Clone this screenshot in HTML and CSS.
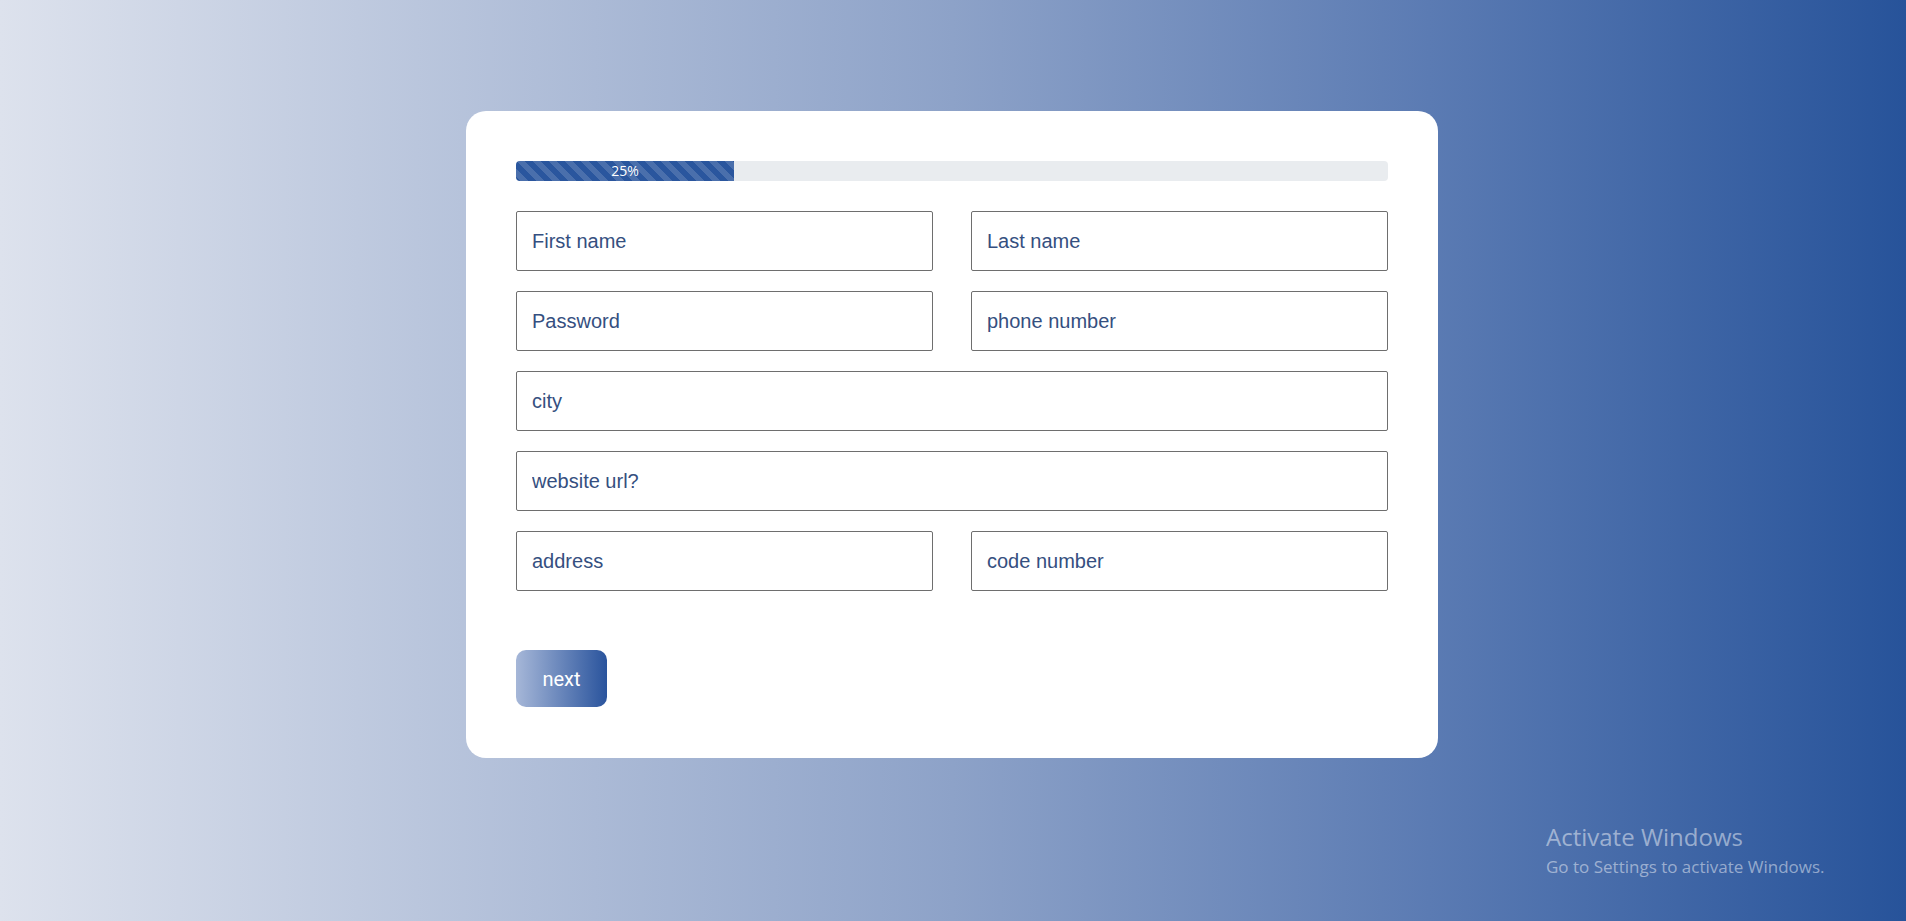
FILE: index.html
```html
<!DOCTYPE html>
<html lang="en">
<head>
<meta charset="utf-8">
<title>Form</title>
<link rel="stylesheet" href="styles.css">
</head>
<body>
<main class="page">
  <form class="card">
    <div class="progress">
      <div class="progress-fill" style="width:25%">25%</div>
    </div>
    <div class="fields">
      <input class="field" type="text" placeholder="First name">
      <input class="field" type="text" placeholder="Last name">
      <input class="field" type="password" placeholder="Password">
      <input class="field" type="text" placeholder="phone number">
      <input class="field wide" type="text" placeholder="city">
      <input class="field wide" type="text" placeholder="website url?">
      <input class="field" type="text" placeholder="address">
      <input class="field" type="text" placeholder="code number">
    </div>
    <button class="next" type="button">next</button>
  </form>
</main>
<div class="watermark">
  <div class="wm-title">Activate Windows</div>
  <div class="wm-sub">Go to Settings to activate Windows.</div>
</div>
</body>
</html>
```
FILE: styles.css
```css
html, body {
  margin: 0;
  padding: 0;
}
body {
  min-height: 100vh;
  background: linear-gradient(to right, #dde2ed 0%, #8da2c8 50%, #5b7bb3 75%, #27539a 100%);
  font-family: "Liberation Sans", Arial, sans-serif;
  overflow: hidden;
}
.page {
  display: flex;
  justify-content: center;
  padding-top: 111px;
  padding-right: 2px;
}
.card {
  width: 972px;
  box-sizing: border-box;
  padding: 50px 50px 51px;
  background: #ffffff;
  border-radius: 20px;
  display: flex;
  flex-direction: column;
  align-items: flex-start;
}
.progress {
  width: 100%;
  height: 20px;
  background: #e9ecef;
  border-radius: 4px;
  overflow: hidden;
  display: flex;
  margin-bottom: 30px;
}
.progress-fill {
  height: 100%;
  background-color: #2a569e;
  background-image: linear-gradient(45deg, rgba(255,255,255,.15) 25%, transparent 25%, transparent 50%, rgba(255,255,255,.15) 50%, rgba(255,255,255,.15) 75%, transparent 75%, transparent);
  background-size: 16px 16px;
  color: #ffffff;
  font-family: "Open Sans", "Noto Sans", sans-serif;
  font-size: 14px;
  line-height: 20px;
  text-align: center;
}
.fields {
  width: 100%;
  display: grid;
  grid-template-columns: 1fr 1fr;
  column-gap: 38px;
  row-gap: 20px;
}
.field {
  height: 60px;
  box-sizing: border-box;
  border: 1px solid #6e6e6e;
  border-radius: 2px;
  padding: 0 15px;
  font-family: "Liberation Sans", Arial, sans-serif;
  font-size: 20px;
  color: #354f80;
  background: #ffffff;
  outline: none;
  min-width: 0;
}
.field::placeholder {
  color: #354f80;
  opacity: 1;
}
.wide {
  grid-column: 1 / -1;
}
.next {
  margin-top: 59px;
  width: 91px;
  height: 57px;
  border: none;
  border-radius: 10px;
  background: linear-gradient(to right, #a6b7d8, #2a549d);
  color: #ffffff;
  font-family: Roboto, "Noto Sans", sans-serif;
  font-size: 20px;
  cursor: pointer;
  padding: 0;
}
.watermark {
  position: absolute;
  left: 1546px;
  top: 825px;
  color: rgba(255, 255, 255, 0.48);
  font-family: "Open Sans", "Noto Sans", sans-serif;
  line-height: 1;
}
.wm-title {
  font-size: 24px;
}
.wm-sub {
  font-size: 17px;
  margin-top: 9px;
}
```
